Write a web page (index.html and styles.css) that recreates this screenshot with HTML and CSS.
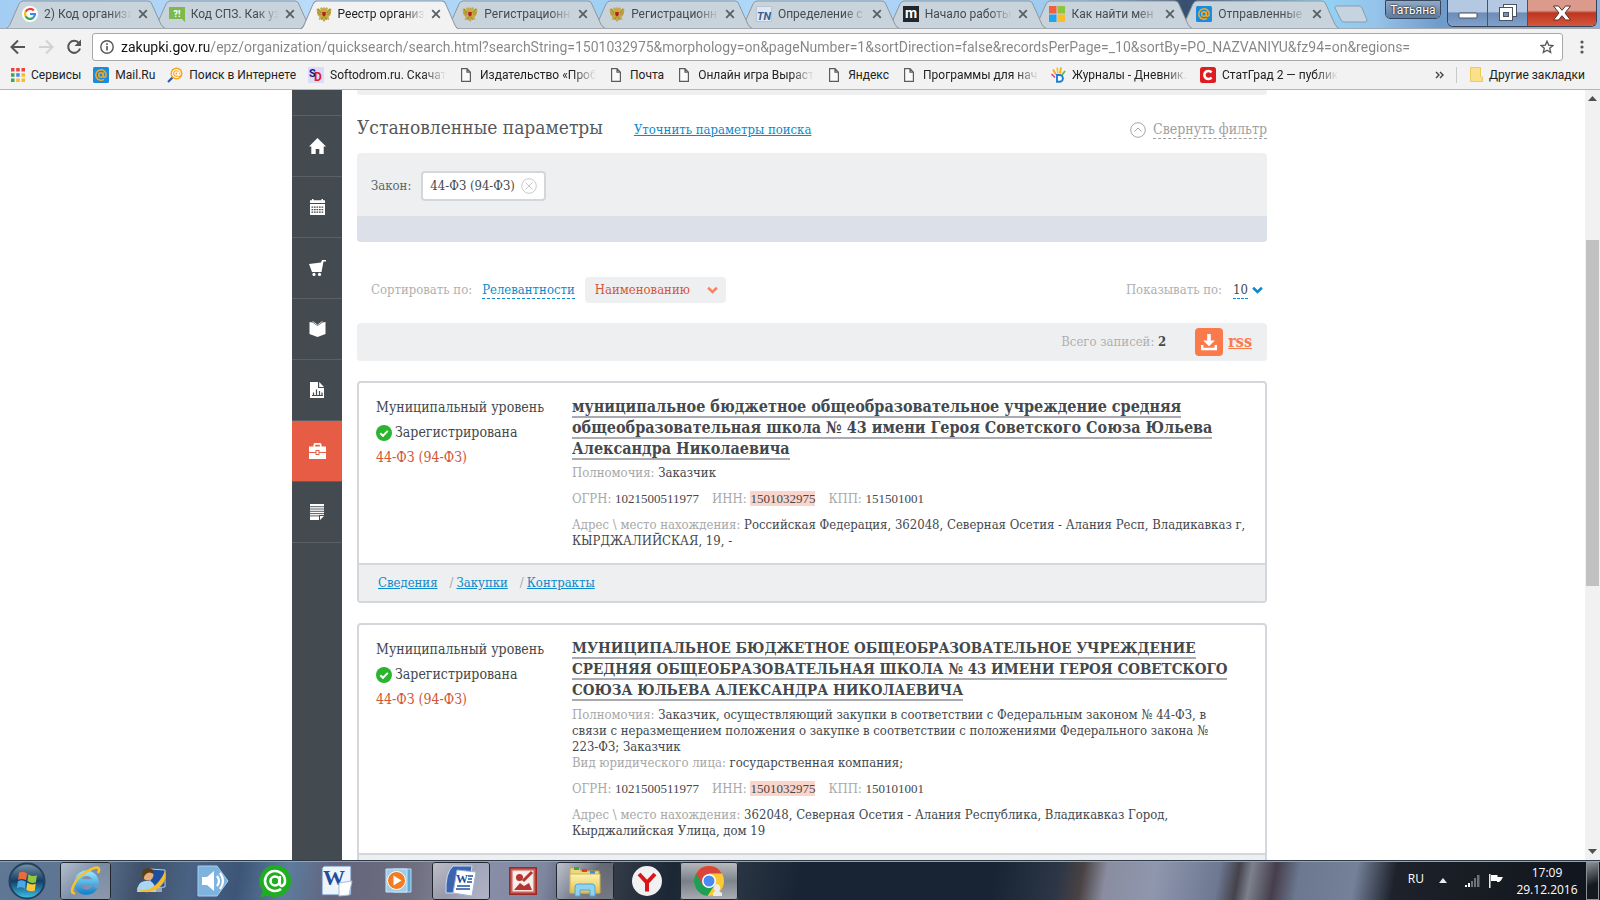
FILE: index.html
```html
<!DOCTYPE html>
<html lang="ru">
<head>
<meta charset="utf-8">
<title>Реестр организаций</title>
<link rel="stylesheet" href="styles.css">
</head>
<body>
<svg class="defs" width="0" height="0" aria-hidden="true">
  <defs>
    <linearGradient id="g-orb" x1="0" y1="0" x2="0" y2="1"><stop offset="0" stop-color="#7d93a8"/><stop offset=".5" stop-color="#123f66"/><stop offset="1" stop-color="#3fc3ee"/></linearGradient>
    <linearGradient id="g-ie" x1="0" y1="0" x2="0" y2="1"><stop offset="0" stop-color="#8fe0fb"/><stop offset="1" stop-color="#1b86d0"/></linearGradient>
    <linearGradient id="g-folder" x1="0" y1="0" x2="0" y2="1"><stop offset="0" stop-color="#fdf3b4"/><stop offset="1" stop-color="#e3c050"/></linearGradient>
    <symbol id="tab-shape" viewBox="0 0 160 28" preserveAspectRatio="none"><path d="M0 28.500C3 27 4 25 5 22L13 4Q14.500 1 17 1H142Q145 1 146 4L155 24Q157 28 160 28.500"/></symbol>
    <symbol id="close" viewBox="0 0 10 10"><path d="M1.200 1.200l7.600 7.600M8.800 1.200l-7.600 7.600" fill="none" stroke="#5a5f64" stroke-width="1.800"/></symbol>
    <symbol id="eagle" viewBox="0 0 16 16"><path d="M8 .500l1 2 1.500-1.500L12 2.500l-1 2 3-2.500 1.500 1.500-.5 2.500-.5 3-2 2 1 3-3-1-2.500 3-2.500-3-3 1 1-3-2-2L1 6 .5 3.500 2 2l3 2.500-1-2L5.500 1 7 2.500z" fill="#c4ab45"/><path d="M2 3l3 4M1.500 6l3 3M14 3l-3 4M14.500 6l-3 3M5 14l2-3M11 14l-2-3" stroke="#857330" stroke-width=".7"/><path d="M6.300 6h3.400v3L8 10.700 6.300 9z" fill="#b3201d"/></symbol>
    <symbol id="doc" viewBox="0 0 16 14"><path d="M3.600.600H9l3.400 3.600v9.200H3.600zM9 .6v3.600h3.400" fill="#fafafa" stroke="#5c5c5c" stroke-width="1.200"/></symbol>
    <symbol id="mail" viewBox="0 0 16 16"><rect width="16" height="16" rx="1.500" fill="#168de2"/><circle cx="8" cy="8" r="2.300" fill="none" stroke="#f5a623" stroke-width="1.500"/><path d="M10.400 5.500v3.600c0 2 2.800 1.500 2.800-1.200A5.200 5.200 0 1 0 11 12.300" fill="none" stroke="#f5a623" stroke-width="1.500"/></symbol>
    <symbol id="chev" viewBox="0 0 10 7"><path d="M1 1.500l4 3.700 4-3.700" fill="none" stroke="currentColor" stroke-width="2.400"/></symbol>
    <symbol id="ok" viewBox="0 0 16 16"><circle cx="8" cy="8" r="8" fill="#2bb52f"/><path d="M4.300 8.200l2.700 2.600 4.800-4.900" fill="none" stroke="#fff" stroke-width="2"/></symbol>
  </defs>
</svg>

<header class="browser">
  <div class="strip">
    <div class="tabs" role="tablist">
      <div class="tab" role="tab"><svg class="shape"><use href="#tab-shape"/></svg>
        <svg class="fav" viewBox="0 0 16 16"><circle cx="8" cy="8" r="8" fill="#fff"/><g fill="none" stroke-width="2.200"><path d="M11.800 4.600A5 5 0 0 0 3.600 5.700" stroke="#ea4335"/><path d="M3.600 5.700a5 5 0 0 0 0 4.600" stroke="#fbbc05"/><path d="M3.600 10.300a5 5 0 0 0 7.700 1.400" stroke="#34a853"/><path d="M11.300 11.700A5 5 0 0 0 13 8H8" stroke="#4285f4"/></g></svg>
        <span>2) Код организа</span><button aria-label="Закрыть"><svg><use href="#close"/></svg></button></div>
      <div class="tab" role="tab"><svg class="shape"><use href="#tab-shape"/></svg>
        <svg class="fav" viewBox="0 0 16 16"><path d="M0 1h16v15l-3-3H0z" fill="#7cba4c"/><text x="8" y="10.500" text-anchor="middle" font-size="9" font-weight="700" fill="#fff">?!</text></svg>
        <span>Код СПЗ. Как уз</span><button aria-label="Закрыть"><svg><use href="#close"/></svg></button></div>
      <div class="tab active" role="tab" aria-selected="true"><svg class="shape"><use href="#tab-shape"/></svg>
        <svg class="fav"><use href="#eagle"/></svg>
        <span>Реестр организ</span><button aria-label="Закрыть"><svg><use href="#close"/></svg></button></div>
      <div class="tab" role="tab"><svg class="shape"><use href="#tab-shape"/></svg>
        <svg class="fav"><use href="#eagle"/></svg>
        <span>Регистрационн</span><button aria-label="Закрыть"><svg><use href="#close"/></svg></button></div>
      <div class="tab" role="tab"><svg class="shape"><use href="#tab-shape"/></svg>
        <svg class="fav"><use href="#eagle"/></svg>
        <span>Регистрационн</span><button aria-label="Закрыть"><svg><use href="#close"/></svg></button></div>
      <div class="tab" role="tab"><svg class="shape"><use href="#tab-shape"/></svg>
        <svg class="fav" viewBox="0 0 16 16"><rect x=".5" y=".5" width="15" height="15" fill="#dfe8f2" stroke="#b9c6d6"/><text x="8" y="14" text-anchor="middle" font-size="11" font-weight="700" font-style="italic" fill="#3c5f8e">TN</text></svg>
        <span>Определение с</span><button aria-label="Закрыть"><svg><use href="#close"/></svg></button></div>
      <div class="tab" role="tab"><svg class="shape"><use href="#tab-shape"/></svg>
        <svg class="fav" viewBox="0 0 16 16"><rect width="16" height="16" fill="#20262c"/><text x="8" y="12" text-anchor="middle" font-size="14" font-weight="700" fill="#fff">m</text></svg>
        <span>Начало работы</span><button aria-label="Закрыть"><svg><use href="#close"/></svg></button></div>
      <div class="tab" role="tab"><svg class="shape"><use href="#tab-shape"/></svg>
        <svg class="fav" viewBox="0 0 16 16"><path d="M0 0h7.500v7.500H0z" fill="#f0603e"/><path d="M8.500 0H16v7.500H8.500z" fill="#8cc63e"/><path d="M0 8.500h7.500V16H0z" fill="#21a5ee"/><path d="M8.500 8.500H16V16H8.500z" fill="#f8bd27"/></svg>
        <span>Как найти мен</span><button aria-label="Закрыть"><svg><use href="#close"/></svg></button></div>
      <div class="tab" role="tab"><svg class="shape"><use href="#tab-shape"/></svg>
        <svg class="fav"><use href="#mail"/></svg>
        <span>Отправленные</span><button aria-label="Закрыть"><svg><use href="#close"/></svg></button></div>
    </div>
    <button class="newtab" aria-label="Новая вкладка"><svg viewBox="0 0 34 18"><path d="M3 1h22q2 0 3 2l5 12q.500 2-2 2H10q-2 0-3-2L1 3q-.500-2 2-2z" fill="#c6d3e0" stroke="#8b9bac"/></svg></button>
    <div class="winctl">
      <button class="user">Татьяна</button>
      <div class="winbtns">
        <button aria-label="Свернуть"><svg width="20" height="20" viewBox="0 0 20 20"><rect x="1" y="10" width="18" height="5" rx="1" fill="#fff" stroke="#4a5361"/></svg></button>
        <button aria-label="Восстановить"><svg width="20" height="20" viewBox="0 0 20 20"><g fill="#fff" stroke="#4a5361"><rect x="5.500" y="1.500" width="13" height="12"/><rect x="1.500" y="4.500" width="13" height="13"/><rect x="5.500" y="9.500" width="5" height="4" fill="#7891b8"/></g></svg></button>
        <button class="x" aria-label="Закрыть окно"><svg width="20" height="20" viewBox="0 0 20 20"><path d="M1.500 3h5L10 7.300 13.500 3h5L13 10l5.500 7h-5L10 12.700 6.500 17h-5L7 10z" fill="#fff" stroke="#58302e"/></svg></button>
      </div>
    </div>
  </div>

  <div class="toolbar">
    <button aria-label="Назад"><svg width="16" height="16" viewBox="0 0 16 16"><path d="M15 8H2M8 1.500L1.500 8 8 14.500" fill="none" stroke="#555" stroke-width="2"/></svg></button>
    <button aria-label="Вперёд"><svg width="16" height="16" viewBox="0 0 16 16"><path d="M1 8h13M8 1.500L14.500 8 8 14.500" fill="none" stroke="#d2d2d2" stroke-width="2"/></svg></button>
    <button aria-label="Обновить"><svg width="16" height="16" viewBox="0 0 16 16"><path d="M13 4.200A6 6 0 1 0 14 9.500" fill="none" stroke="#555" stroke-width="2"/><path d="M15 .500V7H8.500z" fill="#555"/></svg></button>
    <div class="omnibox">
      <svg width="14" height="14" viewBox="0 0 14 14"><circle cx="7" cy="7" r="6.200" fill="none" stroke="#555" stroke-width="1.400"/><path d="M7 6v4.500M7 3.300v1.600" stroke="#555" stroke-width="1.600"/></svg>
      <input type="text" aria-label="Адресная строка" value="zakupki.gov.ru/epz/organization/quicksearch/search.html?searchString=1501032975&amp;morphology=on&amp;pageNumber=1&amp;sortDirection=false&amp;recordsPerPage=_10&amp;sortBy=PO_NAZVANIYU&amp;fz94=on&amp;regions=">
      <button aria-label="В закладки"><svg width="14" height="14" viewBox="0 0 14 14"><path d="M7 1.200l1.700 3.900 4.200.400-3.200 2.800 1 4.200L7 10.300l-3.700 2.200 1-4.200L1.100 5.500l4.200-.400z" fill="none" stroke="#555" stroke-width="1.300"/></svg></button>
    </div>
    <button class="dots" aria-label="Меню"><svg width="4" height="14" viewBox="0 0 4 14"><g fill="#555"><circle cx="2" cy="2" r="1.600"/><circle cx="2" cy="7" r="1.600"/><circle cx="2" cy="12" r="1.600"/></g></svg></button>
  </div>

  <nav class="bookmarks">
    <a href="#"><svg width="14" height="14" viewBox="0 0 14 14"><g fill="#e8453c"><path d="M0 0h3.500v3.500H0zM5.200 0h3.500v3.500H5.200zM10.500 0H14v3.500h-3.500z"/></g><path d="M0 5.200h3.500v3.500H0zM0 10.500h3.500V14H0z" fill="#3aa757"/><path d="M5.200 5.200h3.500v3.500H5.200z" fill="#4688f1"/><path d="M10.500 5.200H14v3.500h-3.500zM5.200 10.500h3.500V14H5.200zM10.500 10.500H14V14h-3.500z" fill="#f9bb2d"/></svg><span>Сервисы</span></a>
    <a href="#"><svg width="16" height="16"><use href="#mail"/></svg><span>Mail.Ru</span></a>
    <a href="#"><svg width="16" height="16" viewBox="0 0 16 16"><path d="M5.500 10.500L1 15" stroke="#2a5ba8" stroke-width="2.200"/><circle cx="9.500" cy="6.500" r="6" fill="#f7a51c"/><circle cx="9.500" cy="6.500" r="1.700" fill="none" stroke="#fff" stroke-width="1.200"/><path d="M11.300 5v2.500c0 1.500 2 1 2-1a3.900 3.900 0 1 0-1.600 3.200" fill="none" stroke="#fff" stroke-width="1.100"/></svg><span>Поиск в Интернете</span></a>
    <a href="#"><svg width="16" height="16" viewBox="0 0 16 16"><rect width="16" height="16" fill="#dadcfb"/><text x="1" y="10" font-size="11" font-weight="700" fill="#16168e">S</text><text x="6" y="14" font-size="12" font-weight="700" fill="#e01b1b">D</text></svg><span class="fade">Softodrom.ru. Скачат</span></a>
    <a href="#"><svg width="16" height="14"><use href="#doc"/></svg><span class="fade">Издательство «Проб</span></a>
    <a href="#"><svg width="16" height="14"><use href="#doc"/></svg><span>Почта</span></a>
    <a href="#"><svg width="16" height="14"><use href="#doc"/></svg><span class="fade">Онлайн игра Выраст</span></a>
    <a href="#"><svg width="16" height="14"><use href="#doc"/></svg><span>Яндекс</span></a>
    <a href="#"><svg width="16" height="14"><use href="#doc"/></svg><span class="fade">Программы для нач</span></a>
    <a href="#"><svg width="15" height="16" viewBox="0 0 15 16"><path d="M2 2.500l3 5" stroke="#f6a21b" stroke-width="1.700"/><path d="M6.200.500l.600 6" stroke="#f5c518" stroke-width="1.700"/><path d="M10 .500L9 6.500" stroke="#f7a51c" stroke-width="1.700"/><path d="M14 4l-3 4" stroke="#57b947" stroke-width="1.700"/><path d="M.500 7l3.500 3.500" stroke="#e8408f" stroke-width="1.700"/><path d="M6 8h2.500a3.300 3.300 0 0 1 0 6.800H6z" fill="#fff" stroke="#1c7fd0" stroke-width="1.900"/></svg><span class="fade">Журналы - Дневник.</span></a>
    <a href="#"><svg width="16" height="16" viewBox="0 0 16 16"><rect width="16" height="16" rx="2.500" fill="#df1c20"/><path d="M11.500 5.500A4 4 0 1 0 11.500 10.500" fill="none" stroke="#fff" stroke-width="2.600"/></svg><span class="fade">СтатГрад 2 — публик</span></a>
    <button class="more" aria-label="Ещё"><svg width="9" height="8" viewBox="0 0 9 8"><path d="M1 1l3 3-3 3M5 1l3 3-3 3" fill="none" stroke="#444" stroke-width="1.400"/></svg></button>
    <a class="other" href="#"><svg width="13" height="15" viewBox="0 0 13 15"><path d="M.5.500h10v9.500h2v4.500H.5z" fill="#fbe08a" stroke="#eccb5e"/></svg><span>Другие закладки</span></a>
  </nav>
</header>

<div class="viewport">
  <div class="scroller">
    <div class="page">
      <nav class="side" aria-label="Разделы">
        <span class="stub"></span>
        <a href="#" aria-label="Главная"><svg viewBox="0 0 17 16"><path d="M8.500 0L17 8.500h-2.300V16h-4.400v-5H6.700v5H2.300V8.500H0z"/></svg></a>
        <a href="#" aria-label="Календарь"><svg viewBox="0 0 17 16"><path d="M1 1.300h2V0h1.500v1.300h8V0H14v1.300h2V4H1zM1 5h15v11H1z"/><path d="M2.500 8.200h12M2.500 10.700h12M2.500 13.200h12" stroke="#434a50" stroke-width="1.300" stroke-dasharray="1.700 .800"/></svg></a>
        <a href="#" aria-label="Закупки"><svg viewBox="0 0 17 16"><path d="M0 4l12-1.500L13 0h4v1.500h-2.500L12.500 12H3z"/><circle cx="5" cy="14.400" r="1.600"/><circle cx="10.500" cy="14.400" r="1.600"/></svg></a>
        <a href="#" aria-label="Справочники"><svg viewBox="0 0 17 16"><path d="M.500 1l3 .500 5 3.500 5-3.500 3-.500v12l-8 3-8-3z"/><path d="M3.500.300l5 3.700 5-3.700" fill="none" stroke="#fff" stroke-width=".8"/></svg></a>
        <a href="#" aria-label="Отчёты"><svg viewBox="0 0 17 16"><path d="M1 0h8v6h6v10H1z"/><path d="M10.200 0L15 5h-4.800z"/><path d="M4.500 13.500v-3M7.500 13.500V7.500M10.500 13.500V9M13 13.500v-3M3 13.500h11" stroke="#434a50" stroke-width="1.200"/></svg></a>
        <a class="on" href="#" aria-label="Организации"><svg viewBox="0 0 17 16"><path d="M0 3.500h4.500V1.500Q4.500 0 6 0h5q1.500 0 1.500 1.500v2H17V9H0zM6.200 3.500h4.600V1.700H6.200zM0 10h17v6H0z" fill-rule="evenodd"/><rect x="7" y="7.500" width="3" height="4" fill="#fff" stroke="#e75c44"/></svg></a>
        <a href="#" aria-label="Документы"><svg viewBox="0 0 17 16"><path d="M1 0h14v11h-5v5H1zM11 12h4l-4 4z"/><path d="M1 2.700h14M1 5h14M1 7.300h14M1 9.600h14M1 11.900h9" stroke="#434a50" stroke-width=".9"/></svg></a>
      </nav>

      <main class="main">
        <div class="prev"></div>
        <div class="headrow">
          <h1>Установленные параметры</h1>
          <a class="refine" href="#">Уточнить параметры поиска</a>
          <button class="collapse"><svg width="16" height="16" viewBox="0 0 16 16"><circle cx="8" cy="8" r="7.300" fill="none" stroke="#a5a5a5"/><path d="M4.500 9.500L8 6l3.500 3.500" fill="none" stroke="#a5a5a5"/></svg><span>Свернуть фильтр</span></button>
        </div>

        <section class="filter">
          <div class="law"><span>Закон:</span>
            <span class="chip">44-ФЗ (94-ФЗ)<button aria-label="Убрать"><svg width="16" height="16" viewBox="0 0 16 16"><circle cx="8" cy="8" r="7.300" fill="none" stroke="#c6c9cc"/><path d="M4.500 4.500l7 7M11.500 4.500l-7 7" stroke="#c6c9cc"/></svg></button></span>
          </div>
          <div class="band"></div>
        </section>

        <div class="sort">
          <span class="lbl">Сортировать по:</span>
          <a href="#">Релевантности</a>
          <label class="byname"><select aria-label="Сортировка"><option>Наименованию</option></select><svg width="11" height="8"><use href="#chev"/></svg></label>
          <label class="per"><span>Показывать по:</span><select><option>10</option></select><svg width="11" height="8"><use href="#chev"/></svg></label>
        </div>

        <div class="total"><span>Всего записей: <b>2</b></span>
          <a href="#"><svg width="28" height="28" viewBox="0 0 28 28"><rect width="28" height="28" rx="4" fill="#fb7a4c"/><path d="M12.200 6h3.600v6.500h4L14 18.200l-5.800-5.700h4z" fill="#fff"/><path d="M7.200 17v4h13.600v-4" fill="none" stroke="#fff" stroke-width="2.400"/></svg><span>rss</span></a>
        </div>

        <article class="card">
          <div class="body">
            <ul class="status"><li>Муниципальный уровень</li><li><svg width="16" height="16"><use href="#ok"/></svg>Зарегистрирована</li><li class="fz">44-ФЗ (94-ФЗ)</li></ul>
            <div class="info">
              <h2><a href="#">муниципальное бюджетное общеобразовательное учреждение средняя<br>общеобразовательная школа № 43 имени Героя Советского Союза Юльева<br>Александра Николаевича</a></h2>
              <p class="first"><i>Полномочия:</i> Заказчик</p>
              <p class="ids"><span><i>ОГРН:</i> <b>1021500511977</b></span><span><i>ИНН:</i> <mark><b>1501032975</b></mark></span><span><i>КПП:</i> <b>151501001</b></span></p>
              <p><i>Адрес \ место нахождения:</i> Российская Федерация, 362048, Северная Осетия - Алания Респ, Владикавказ г,<br>КЫРДЖАЛИЙСКАЯ, 19, -</p>
            </div>
          </div>
          <footer><a href="#">Сведения</a><span>/</span><a href="#">Закупки</a><span>/</span><a href="#">Контракты</a></footer>
        </article>

        <article class="card">
          <div class="body">
            <ul class="status"><li>Муниципальный уровень</li><li><svg width="16" height="16"><use href="#ok"/></svg>Зарегистрирована</li><li class="fz">44-ФЗ (94-ФЗ)</li></ul>
            <div class="info">
              <h2 class="caps"><a href="#">МУНИЦИПАЛЬНОЕ БЮДЖЕТНОЕ ОБЩЕОБРАЗОВАТЕЛЬНОЕ УЧРЕЖДЕНИЕ<br>СРЕДНЯЯ ОБЩЕОБРАЗОВАТЕЛЬНАЯ ШКОЛА № 43 ИМЕНИ ГЕРОЯ СОВЕТСКОГО<br>СОЮЗА ЮЛЬЕВА АЛЕКСАНДРА НИКОЛАЕВИЧА</a></h2>
              <p class="first"><i>Полномочия:</i> Заказчик, осуществляющий закупки в соответствии с Федеральным законом № 44-ФЗ, в<br>связи с неразмещением положения о закупке в соответствии с положениями Федерального закона №<br>223-ФЗ; Заказчик<br><i>Вид юридического лица:</i> государственная компания;</p>
              <p class="ids"><span><i>ОГРН:</i> <b>1021500511977</b></span><span><i>ИНН:</i> <mark><b>1501032975</b></mark></span><span><i>КПП:</i> <b>150101001</b></span></p>
              <p><i>Адрес \ место нахождения:</i> 362048, Северная Осетия - Алания Республика, Владикавказ Город,<br>Кырджалийская Улица, дом 19</p>
            </div>
          </div>
          <footer></footer>
        </article>
      </main>
    </div>
  </div>
  <div class="bar" aria-hidden="true">
    <svg width="9" height="5" viewBox="0 0 9 5"><path d="M4.500 0L9 5H0z" fill="#505050"/></svg>
    <div class="track"><div class="thumb"></div></div>
    <svg width="9" height="5" viewBox="0 0 9 5"><path d="M0 0h9L4.500 5z" fill="#505050"/></svg>
  </div>
</div>

<footer class="taskbar">
  <button class="orb" aria-label="Пуск"><svg width="38" height="38" viewBox="0 0 38 38"><circle cx="19" cy="19" r="17.500" fill="url(#g-orb)" stroke="#24415c" stroke-width="2"/><g transform="rotate(8 19 19)"><path d="M10 12q4-3 8-.500v7q-4-2-8 .500z" fill="#ef6a35"/><path d="M19.500 12q4 2.500 8.500 0v7q-4.500 2.500-8.500 0z" fill="#92c83e"/><path d="M10 20.500q4-3 8-.500v7q-4-2-8 .500z" fill="#49a8e6"/><path d="M19.500 20.500q4 2.500 8.500 0v7q-4.500 2.500-8.500 0z" fill="#fcc739"/></g></svg></button>
  <button class="app open ie" aria-label="Internet Explorer"><svg width="32" height="32" viewBox="0 0 32 32"><path d="M25 22A9.500 9.500 0 1 1 26 17H9" fill="none" stroke="url(#g-ie)" stroke-width="5.500"/><path d="M5 28C-2 30 4 14 16 7S31 2 28 8" fill="none" stroke="#f6c32c" stroke-width="2.600"/></svg></button>
  <button class="app" aria-label="Удалённый помощник"><svg width="32" height="32" viewBox="0 0 32 32"><path d="M15 4l15 1v17l-15 1z" fill="#1d4fa0" stroke="#c3ccd6"/><path d="M20 23h7v4h-7z" fill="#9aa7b4"/><circle cx="13" cy="10" r="5.500" fill="#e5ae78"/><path d="M7 10q0-7 6-7t6 6q-5-3-8 0t-2 5q-2-1-2-4z" fill="#5a3d1c"/><path d="M2 27q0-10 8-11h5q4 1 6 9v2z" fill="#a9d6f2"/><path d="M1 23q9 5 17-1T30 6q3 11-8 18T1 23z" fill="#f4bb2e"/></svg></button>
  <button class="app" aria-label="Звук"><svg width="32" height="32" viewBox="0 0 32 32"><path d="M1 1h19l11 15-11 15H1z" fill="#7fb3df" stroke="#a8cfee"/><path d="M5 12h5l7-6v20l-7-6H5z" fill="#fff"/><path d="M20 11q4 5 0 10M23 8q6 8 0 16" fill="none" stroke="#fff" stroke-width="2.200"/></svg></button>
  <button class="app" aria-label="Mail.Ru Агент"><svg width="32" height="32" viewBox="0 0 32 32"><path d="M16 0a16 16 0 1 1-6 30.800L1 32l3-6A16 16 0 0 1 16 0z" fill="#1fae20"/><circle cx="16" cy="16" r="4.500" fill="none" stroke="#fff" stroke-width="2.600"/><path d="M20.800 11v7.500c0 4 5.400 3 5.200-3A10 10 0 1 0 22 24" fill="none" stroke="#fff" stroke-width="2.600"/></svg></button>
  <button class="app" aria-label="Word"><svg width="32" height="32" viewBox="0 0 32 32"><path d="M3 1h27v29H1V3z" fill="#eef4fb" stroke="#5b7fb9"/><text x="13" y="20" text-anchor="middle" font-size="22" font-weight="700" fill="#1f4e9c">W</text><path d="M18 18l13-2-3 14-10 1z" fill="#fff" stroke="#a9bcd8"/></svg></button>
  <button class="app" aria-label="Проигрыватель"><svg width="28" height="28" viewBox="0 0 28 28"><path d="M8 2h18v23H8z" fill="#5fa7d4" stroke="#b6dcf2"/><path d="M1 2h21v23H1z" fill="#9fcdea" stroke="#c9e6f7"/><circle cx="11.500" cy="13.500" r="9" fill="#f47b20" stroke="#fff"/><path d="M8.500 8.500v10l8-5z" fill="#fff"/></svg></button>
  <button class="app open" aria-label="Документ Word"><svg width="32" height="32" viewBox="0 0 32 32"><path d="M8 1h19l-4 27H1Q0 8 8 1z" fill="#3a66b0" stroke="#cfdcf2"/><path d="M12 5l19 2-4 24-19-3z" fill="#fff" stroke="#9db3d8"/><text x="17" y="18" text-anchor="middle" font-size="12" font-weight="700" fill="#24509c">W</text><path d="M23 11h5M23 14h4M22 17h5M12 21h13M11 24h14" stroke="#24509c" stroke-width="1.600"/></svg></button>
  <button class="app" aria-label="Рисунки"><svg width="28" height="28" viewBox="0 0 28 28"><rect x=".8" y=".8" width="26.400" height="26.400" fill="#c9605a" stroke="#9b2a24" stroke-width="1.600"/><rect x="4" y="4" width="20" height="20" fill="#fbeeee" stroke="#f6dedb"/><circle cx="10.500" cy="10.500" r="3.500" fill="#b4352d"/><path d="M5 23l6-7 4 3 5-3 3 7z" fill="#b4352d"/><path d="M14 14l9-9" stroke="#b4352d" stroke-width="3"/></svg></button>
  <button class="app open" aria-label="Проводник"><svg width="32" height="32" viewBox="0 0 32 32"><path d="M1 3h9l2 3h18v22H1z" fill="#edd584" stroke="#c8a94c"/><path d="M5 2h5v3H5z" fill="#38a838"/><path d="M13 4h5v3h-5z" fill="#d7432f"/><path d="M21 6h5v3h-5z" fill="#3d8fe0"/><path d="M1 9h30v19H1z" fill="url(#g-folder)" stroke="#d4b14d"/><path d="M6 31V22q0-3 3-3h14q3 0 3 3v9h-5v-6H11v6z" fill="#8fd3f0" stroke="#4fa7d2"/></svg></button>
  <button class="app" aria-label="Яндекс"><svg width="30" height="30" viewBox="0 0 30 30"><circle cx="15" cy="15" r="15" fill="#f1f1f1"/><path d="M7 8l8 8.500L23 8M15 16v9.500" fill="none" stroke="#d9151b" stroke-width="4"/></svg></button>
  <button class="app open lit" aria-label="Chrome"><svg width="30" height="30" viewBox="0 0 30 30"><circle cx="15" cy="15" r="15" fill="#fcc934"/><path d="M15 15L2 7.500A15 15 0 0 0 13.500 30L21 18.500z" fill="#1e9e57"/><path d="M2 7.500A15 15 0 0 1 28 7.500H15L8.500 18.800z" fill="#d9453a"/><circle cx="15" cy="15" r="7" fill="#fff"/><circle cx="15" cy="15" r="5.500" fill="#4a8af4"/><path d="M23 18a3.500 4 0 0 1 2 7l3 2v3h-9v-3l2-2a3.500 4 0 0 1 2-7z" fill="#e9ece9"/></svg></button>
  <div class="tray">
    <span class="lang">RU</span>
    <svg width="8" height="5" viewBox="0 0 8 5"><path d="M4 0l4 5H0z" fill="#e8eaec"/></svg>
    <svg class="sig" width="15" height="12" viewBox="0 0 15 12"><path d="M0 10h2v2H0zM3 8h2v4H3z" fill="#fff"/><path d="M6 6h2v6H6zM9 3h2v9H9zM12 0h2.500v12H12z" fill="#6f7378"/></svg>
    <svg width="15" height="14" viewBox="0 0 15 14"><path d="M.800 0v14" stroke="#fff" stroke-width="1.400"/><path d="M2 1h6.500v2H14l-2 3.500-2 1.500H8V7H2z" fill="#fff"/></svg>
    <time>17:09<br>29.12.2016</time>
    <button class="peek" aria-label="Рабочий стол"></button>
  </div>
</footer>
</body>
</html>
```
FILE: styles.css
```css
* { box-sizing: border-box; }
body { margin: 0; height: 100vh; display: flex; flex-direction: column; overflow: hidden; background: #fff; color: #43484d; font: 13px/16px "Roboto Slab", "DejaVu Serif Condensed", "DejaVu Serif", serif; }
button, select, input { font: inherit; color: inherit; border: 0; padding: 0; margin: 0; background: none; }
button { display: flex; align-items: center; justify-content: center; }
svg { display: block; flex: none; }
.defs { position: absolute; }
a { color: #0c8acb; }

/* browser chrome */
.browser { flex: none; background: #f2f2f2; border-bottom: 1px solid #b6b6b6; font: 12px/16px Roboto, "Open Sans", sans-serif; color: #222; }
.strip { display: flex; height: 29px; padding-left: 6px; border-bottom: 1px solid #a3a9b0; background: linear-gradient(90deg, #a4cdf3 0, #b9dcfa 20%, #9fd0f4 38%, #b4d9f9 50%, #9cc8ee 68%, #38506f 74%, #3e5a80 76%, #90d6f8 82%, #96c3ea 86%, #6f9bca 90%, #8fb1dc 100%); }
.tabs { flex: 1; display: flex; min-width: 0; }
.tab { position: relative; flex: 1; min-width: 0; height: 28px; margin-right: -13px; padding: 0 18px 0 16px; display: flex; align-items: center; gap: 6px; color: #454b52; }
.tab .shape { position: absolute; left: 0; top: 0; width: 100%; height: 28px; fill: #c9d3db; stroke: #8f979f; stroke-width: 1; }
.tab:nth-child(1) { z-index: 9; } .tab:nth-child(2) { z-index: 8; } .tab:nth-child(4) { z-index: 7; } .tab:nth-child(5) { z-index: 6; }
.tab:nth-child(6) { z-index: 5; } .tab:nth-child(7) { z-index: 4; } .tab:nth-child(8) { z-index: 3; } .tab:nth-child(9) { z-index: 2; }
.tab.active { z-index: 10; color: #222; height: 29px; padding-bottom: 1px; }
.tab.active .shape { fill: #f2f2f2; height: 29px; }
.tab:last-child { margin-right: 0; flex: 1 1 13px; }
.tab .fav { position: relative; width: 16px; height: 16px; font-family: Roboto, sans-serif; }
.tab span { position: relative; flex: 1; min-width: 0; overflow: hidden; white-space: nowrap; -webkit-mask-image: linear-gradient(90deg, #000 75%, transparent); mask-image: linear-gradient(90deg, #000 75%, transparent); }
.tab button { position: relative; }
.tab button svg { width: 10px; height: 10px; }
.newtab { width: 34px; margin-left: -6px; }
.newtab svg { width: 34px; height: 18px; }
.winctl { flex: none; display: flex; align-items: flex-start; gap: 6px; padding: 0 3px 0 17px; }
.user { width: 56px; height: 19px; border: 1px solid #e4edf7; outline: 1px solid #36485f; outline-offset: -1px; border-radius: 0 0 5px 5px; background: linear-gradient(#93a9c4, #5d7ba3); color: #fff; text-shadow: 0 0 2px #222, 0 0 2px #222; }
.winbtns { display: flex; height: 27px; border: 1px solid #32435a; border-top: 0; border-radius: 0 0 6px 6px; overflow: hidden; box-shadow: inset 0 0 0 1px #dfe9f5; }
.winbtns button { width: 40px; background: linear-gradient(#b4c8e2 45%, #6d8cb6 50%, #7fa1cb); border-right: 1px solid #42546e; }
.winbtns .x { width: 68px; border: 0; background: linear-gradient(#dc9a8c 40%, #bd3520 50%, #d5573c); }
.toolbar { display: flex; align-items: center; height: 36px; padding: 4px 0 4px 4px; }
.toolbar > button { width: 28px; }
.toolbar > .dots { width: 37px; }
.omnibox { flex: 1; display: flex; align-items: center; height: 28px; margin-left: 4px; border: 1px solid #a8a8a8; border-radius: 3px; background: #fff; padding: 0 8px 0 7px; }
.omnibox input { flex: 1; min-width: 0; margin: 0 7px; outline: 0; font-size: 14px; line-height: 20px; color: transparent; background: linear-gradient(90deg, #111 88px, #858585 88px); -webkit-background-clip: text; background-clip: text; }
.bookmarks { display: flex; align-items: center; height: 24px; padding: 0 15px 5px 11px; gap: 12px; white-space: nowrap; }
.bookmarks a { display: flex; align-items: center; gap: 6px; color: #222; text-decoration: none; }
.fade { width: 116px; overflow: hidden; -webkit-mask-image: linear-gradient(90deg, #000 80%, transparent); mask-image: linear-gradient(90deg, #000 80%, transparent); }
.more { margin-left: auto; }
.bookmarks .other { border-left: 1px solid #c9c9c9; padding-left: 13px; }

/* page */
.viewport { flex: 1; min-height: 0; display: flex; }
.scroller { flex: 1; min-width: 0; overflow: hidden; }
.page { display: flex; max-width: 1001px; min-height: 100%; margin: 0 auto; padding-right: 26px; }
.side { flex: none; width: 50px; background: #434a50; }
.side a, .side .stub { display: flex; align-items: center; justify-content: center; height: 61px; border-bottom: 1px solid #5a6066; }
.side .stub { height: 26px; }
.side .on { background: #e75c44; }
.side svg { width: 17px; height: 16px; fill: #fff; }
.main { flex: 1; min-width: 0; padding-left: 15px; }
.prev { height: 5px; border-radius: 0 0 4px 4px; background: #eeeff1; }
.headrow { display: flex; align-items: baseline; padding: 20px 0 14px; }
h1 { margin: 0; font-size: 19px; line-height: 24px; font-weight: 400; color: #55595c; }
.refine { margin-left: 31px; }
.collapse { align-self: flex-end; margin-left: auto; gap: 7px; color: #a0a0a0; font-size: 14px; }
.collapse span { padding-bottom: 1px; border-bottom: 1px dashed #a0a0a0; }
.filter { border-radius: 4px; overflow: hidden; background: #eeeff1; color: #5f6468; }
.law { display: flex; align-items: center; gap: 10px; padding: 18px 14px 15px; }
.chip { display: flex; align-items: center; gap: 6px; height: 30px; padding: 0 7px; border: 2px solid #d3d6db; border-radius: 4px; background: #fff; color: #43484d; }
.band { height: 26px; background: #dce0e8; }
.sort { display: flex; align-items: center; margin-top: 35px; padding-left: 14px; color: #b0b0b0; }
.sort a { margin: 0 10px; text-decoration: none; border-bottom: 1px dashed #0c8acb; }
select { appearance: none; }
.byname { display: flex; align-items: center; gap: 16px; height: 26px; padding: 0 8px 0 10px; border-radius: 4px; background: #eeeff1; color: #d25837; }
.byname svg { color: #fb8360; }
.per { display: flex; align-items: center; margin-left: auto; padding-right: 4px; color: #b0b0b0; }
.per select { margin: 0 4px 0 11px; color: #43484d; border-bottom: 1px dashed #0c8acb; }
.per svg { color: #0c8acb; }
.total { display: flex; align-items: center; justify-content: flex-end; gap: 29px; height: 38px; margin-top: 20px; padding-right: 15px; border-radius: 4px; background: #eeeff1; color: #b0b0b0; }
.total b { color: #43484d; }
.total a { display: flex; align-items: center; gap: 5px; color: #fb7a4c; font-size: 16px; font-weight: 700; }
.card { margin-top: 20px; border: 2px solid #d3d6db; border-radius: 4px; overflow: hidden; background: #fff; }
.body { display: flex; padding: 12px 17px 14px; }
.status { flex: none; width: 196px; margin: 0; padding: 0; list-style: none; font-size: 14px; line-height: 25px; white-space: nowrap; }
.status li { display: flex; align-items: center; gap: 3px; }
.fz { color: #d25837; }
.info { flex: 1; min-width: 0; padding-top: 1px; }
h2 { margin: 0; font-size: 16px; line-height: 21px; }
h2.caps { font-size: 15px; }
h2 a { color: #43484d; text-decoration: none; border-bottom: 2px solid #a9abb0; }
.info p { margin: 10px 0 0; }
.info .first { margin-top: 6px; }
i { font-style: normal; color: #a8a8a8; }
.ids { display: flex; gap: 13px; }
.ids b { font-family: "Liberation Serif", serif; font-weight: 400; }
mark { background: #fcd5ca; color: inherit; }
.card footer { display: flex; align-items: center; height: 38px; padding-left: 19px; border-top: 2px solid #d3d6db; background: #eeeff1; }
.card footer span { margin: 0 3px 0 12px; color: #a8a8a8; }

.bar { flex: none; width: 15px; display: flex; flex-direction: column; align-items: center; padding: 6px 0; background: #f1f1f1; }
.track { flex: 1; width: 13px; display: flex; flex-direction: column; }
.track::before { content: ""; flex: 139; }
.track::after { content: ""; flex: 262; }
.thumb { flex: 345; background: #c1c1c1; }

/* taskbar */
.taskbar { flex: none; display: flex; align-items: center; height: 40px; border-top: 1px solid #2c3c48; box-shadow: inset 0 1px 0 #8fa5b5; background: linear-gradient(100deg, #5f7896 0, #5d7391 6%, #3f5068 9%, #4a6384 12%, #3d5576 15%, #5d7c9e 18%, #63647c 21%, #706f80 26%, #8a8fa8 30%, #7f879f 34%, #353b49 38%, #1c2735 42%, #2a3543 46%, #182433 50%, #182433 62%, #2c3646 66%, #4a4243 67.500%, #8a8d9f 69%, #8f97ae 72%, #6d7891 76%, #45424b 77.200%, #7c818d 78%, #473d4c 79.500%, #6b7890 81%, #758199 84.500%, #1d222b 87%, #171b22 93%, #10141d 100%); font: 12px/17px "Open Sans", sans-serif; color: #fff; }
.taskbar text { font-family: "Liberation Serif", serif; }
.orb { width: 54px; }
.app { width: 62px; height: 38px; }
.open { border: 1px solid #d4d9df; outline: 1px solid #20262d; outline-offset: -1px; border-radius: 3px; width: 58px; margin: 0 2px; background: linear-gradient(135deg, #ffffff88, #ffffff33 50%, #ffffff55); }
.ie { width: 51px; margin: 0 9px 0 6px; }
.lit { background: linear-gradient(#ffffffaa, #ffffff66 50%, #ffffff99); }
.tray { display: flex; align-items: center; height: 100%; margin-left: auto; }
.lang { margin: 0 15px 5px 0; }
.sig { margin: 0 9px 0 18px; }
time { margin-left: 10px; width: 66px; text-align: center; }
.peek { width: 13px; height: 38px; margin: 0 1px 0 6px; border: 1px solid #8a9097; background: linear-gradient(160deg, #8a9097, #15191f 60%); }
```
